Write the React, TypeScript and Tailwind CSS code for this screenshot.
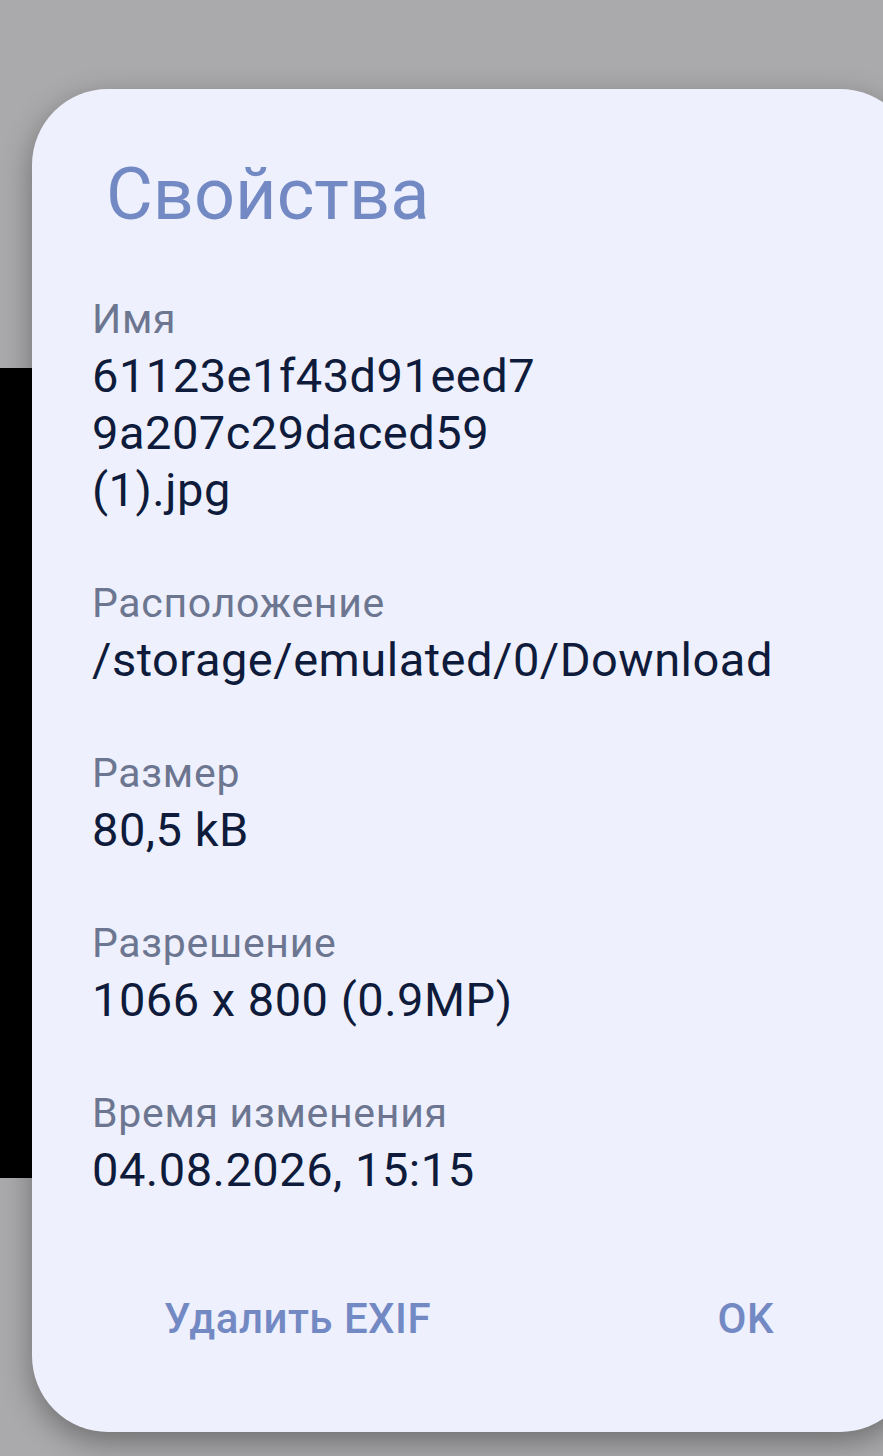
const rows = [
  { label: 'Имя', value: ['61123e1f43d91eed7', '9a207c29daced59', '(1).jpg'] },
  { label: 'Расположение', value: ['/storage/emulated/0/Download'] },
  { label: 'Размер', value: ['80,5 kB'] },
  { label: 'Разрешение', value: ['1066 x 800 (0.9MP)'] },
  { label: 'Время изменения', value: ['04.08.2026, 15:15'] },
]

export default function App() {
  return (
    <div className="relative h-[1456px] w-[883px] overflow-hidden bg-[#aaa9ab] font-['Roboto',sans-serif]">
      {/* dimmed photo behind the dialog */}
      <div className="mt-[368px] h-[810px] w-full bg-black" />

      <div className="absolute left-[32px] top-[89px] w-[884px] rounded-[76px] bg-[#eef0fd] pb-[89px] pl-[60px] pr-[142px] pt-[64px] shadow-[0_10px_30px_rgba(0,0,0,0.35)]">
        <h1 className="ml-[14px] text-[72px] leading-[84px] font-normal text-[#7389c3]">Свойства</h1>

        <div className="mt-[54px] flex flex-col gap-[57px]">
          {rows.map((row) => (
            <div key={row.label}>
              <div className="text-[41px] leading-[56px] tracking-[0.7px] text-[#6c7690]">{row.label}</div>
              {row.value.map((line) => (
                <div key={line} className="text-[47px] leading-[57px] tracking-[0.5px] text-[#0e1b3b]">
                  {line}
                </div>
              ))}
            </div>
          ))}
        </div>

        <div className="ml-[72px] mt-[96px] flex items-center justify-between text-[42px] leading-[49px] tracking-[0.5px] font-medium text-[#7389c3]">
          <button>Удалить EXIF</button>
          <button>OK</button>
        </div>
      </div>
    </div>
  )
}
